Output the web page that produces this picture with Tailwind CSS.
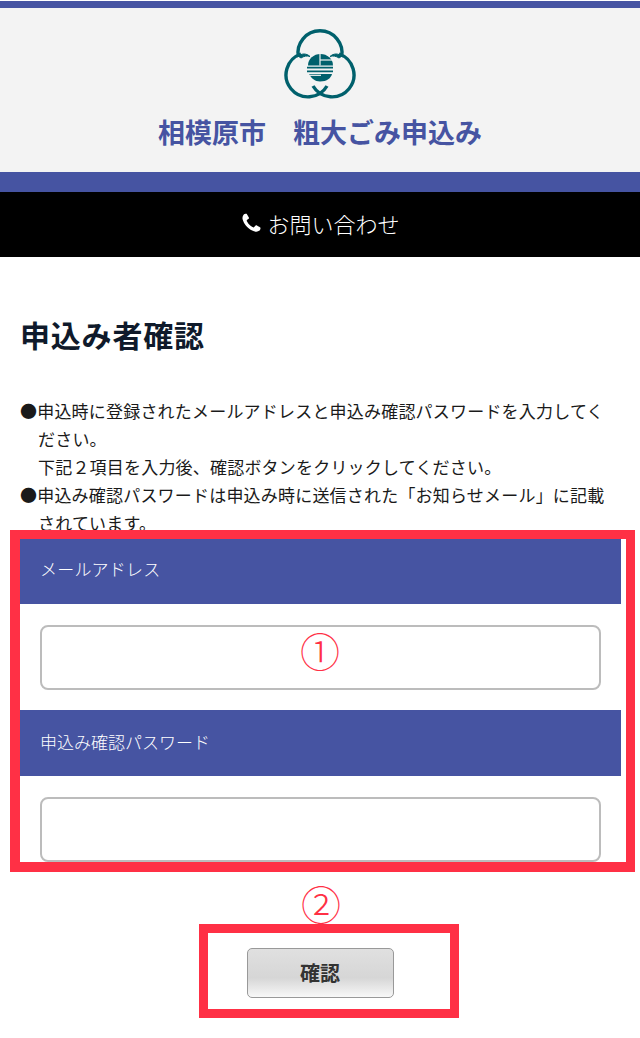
<!DOCTYPE html>
<html lang="ja">
<head>
<meta charset="utf-8">
<script src="https://cdn.jsdelivr.net/npm/@tailwindcss/browser@4"></script>
</head>
<body class="bg-white">
<div class="relative w-[640px] h-[1038px] overflow-hidden bg-white font-['Noto_Sans_CJK_JP',sans-serif] text-[#0f1a2b]">
  <header class="pt-px">
    <div class="h-[7px] bg-[#4654a2]"></div>
    <div class="h-[164px] bg-[#f3f3f3] flex flex-col items-center">
      <svg class="mt-[21px] w-[72px] h-[70px]" viewBox="284 29 72 70" fill="none" stroke="#00606c" stroke-width="3.4">
        <path d="M298.4 57 A22 22 0 1 1 341.6 57"/>
        <path d="M298 56 C302 53.5 306 53 310 56.5 C307 55.5 304 56 301 58 Z" fill="#00606c" stroke-width="1"/>
        <path d="M342 56 C338 53.5 334 53 330 56.5 C333 55.5 336 56 339 58 Z" fill="#00606c" stroke-width="1"/>
        <path d="M301 54 A22 22 0 1 0 327 86"/>
        <path d="M339 54 A22 22 0 1 1 313 86"/>
        <path d="M308 65.5 A12.5 11.5 0 0 1 333 65.5 Z" fill="#00606c" stroke="none"/>
        <path d="M320 54 V65.5" stroke="#f3f3f3" stroke-width="1.2"/>
        <path d="M320 60 H334" stroke="#f3f3f3" stroke-width="1.2"/>
        <path d="M307 67.6 H333 M307 71.4 H333" stroke-width="1.6"/>
        <path d="M309 74 H332 C331 78 327 81.5 320 81.5 C315 81.5 311 78 309 74 Z" fill="#00606c" stroke="none"/>
        <path d="M309 75.3 H321" stroke="#f3f3f3" stroke-width="1.2"/>
      </svg>
      <h1 class="mt-[13px] text-[27px] leading-[40px] font-bold text-[#4654a2] whitespace-nowrap">相模原市　粗大ごみ申込み</h1>
    </div>
    <div class="h-[20px] bg-[#4654a2]"></div>
    <div class="h-[65px] bg-black flex items-center justify-center gap-[4px] text-white text-[22px]">
      <svg class="w-[23px] h-[23px] -mt-[2px]" viewBox="0 0 1792 1792" fill="#fff"><path d="M1600 1240q0 27-10 70.5t-21 68.5q-21 50-122 106-94 51-186 51-27 0-53-3.5t-57.5-12.5-47-14.5-55.5-20.5-49-18q-98-35-175-83-127-79-264-216t-216-264q-48-77-83-175-3-9-18-49t-20.5-55.5-14.5-47-12.5-57.5-3.5-53q0-92 51-186 56-101 106-122 25-11 68.5-21t70.5-10q14 0 21 3 18 6 53 76 11 19 30 54t35 63.5 31 53.5q3 4 17.5 25t21.5 35.5 7 28.5q0 20-28.5 50t-62 55-62 53-28.5 46q0 9 5 22.5t8.5 20.5 14 24 11.5 19q76 137 174 235t235 174q2 1 19 11.5t24 14 20.5 8.5 22.5 5q18 0 46-28.5t53-62 55-62 50-28.5q14 0 28.5 7t35.5 21.5 25 17.5q25 15 53.5 31t63.5 35 54 30q70 35 76 53 3 7 3 21z"/></svg>
      <span class="-mt-[2px] font-light">お問い合わせ</span>
    </div>
  </header>

  <main class="pl-5 pr-[19px]">
    <h2 class="mt-[53px] text-[30px] leading-[48px] font-bold tracking-[0.8px]">申込み者確認</h2>
    <div class="mt-[39px] mr-[12px] text-[17px] leading-[28px] tracking-[0.2px] text-[#1a1a1a]">
      <p class="pl-[18px] -indent-[18px] whitespace-pre-line">●申込時に登録されたメールアドレスと申込み確認パスワードを入力してください。
      下記２項目を入力後、確認ボタンをクリックしてください。</p>
      <p class="pl-[18px] -indent-[18px]">●申込み確認パスワードは申込み時に送信された「お知らせメール」に記載されています。</p>
    </div>
    <form class="mt-[2px]">
      <div class="h-[65px] bg-[#4654a2] flex items-center pl-5 pb-[5px] text-white text-[17px] font-light tracking-[0.2px]">メールアドレス</div>
      <div class="px-5 pt-[21px] pb-[20px]">
        <div class="h-[65px] rounded-lg border-2 border-[#bcbcbc] bg-white"></div>
      </div>
      <div class="h-[66px] bg-[#4654a2] flex items-center pl-5 pb-[3px] text-white text-[17px] font-light">申込み確認パスワード</div>
      <div class="px-5 pt-[21px]">
        <div class="h-[65px] rounded-lg border-2 border-[#bcbcbc] bg-white"></div>
      </div>
      <div class="mt-[86px] flex justify-center pr-[1px]">
        <button type="button" class="w-[147px] h-[50px] rounded-[5px] border border-[#999] bg-gradient-to-b from-[#e0e0e0] via-[#d6d6d6] via-60% to-[#f8f8f8] text-[20px] font-bold text-[#333]">確認</button>
      </div>
    </form>
  </main>

  <div class="absolute left-[10px] top-[530px] w-[625px] h-[342px] border-[10px] border-t-[9px] border-r-[9px] border-[#ff3045]"></div>
  <div class="absolute left-[199px] top-[924px] w-[260px] h-[94px] border-[9px] border-[#ff3045]"></div>
  <span class="absolute left-[296px] top-[622px] w-[48px] text-center text-[40px] leading-[56px] font-light text-[#ff3045]">①</span>
  <span class="absolute left-[297px] top-[875px] w-[48px] text-center text-[40px] leading-[56px] font-light text-[#ff3045]">②</span>
</div>
</body>
</html>
